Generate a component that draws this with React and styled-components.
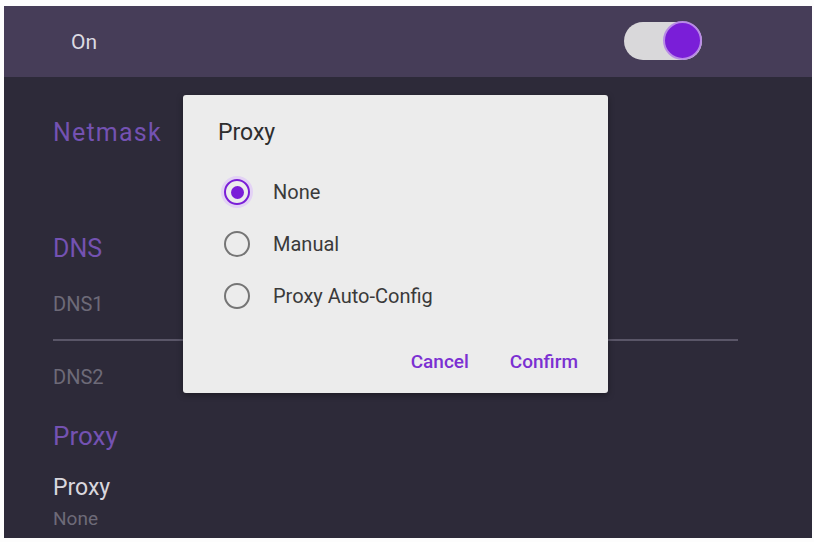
import React from 'react';
import styled, { createGlobalStyle } from 'styled-components';

const GlobalStyle = createGlobalStyle`
  html, body {
    margin: 0;
    padding: 0;
    background: #fdfdfd;
  }
  body {
    font-family: Roboto, "Noto Sans", "Liberation Sans", sans-serif;
  }
`;

const Screen = styled.div`
  position: relative;
  margin: 6px 2px 0 4px;
  width: 808px;
  height: 532px;
  background: #2d2a39;
  overflow: hidden;
`;

const Header = styled.div`
  height: 71px;
  background: #463d58;
  display: flex;
  align-items: center;
  justify-content: space-between;
  padding: 0 110px 0 67px;
  box-sizing: border-box;
`;

const HeaderLabel = styled.span`
  color: #dcdae2;
  font-size: 21px;
  line-height: 28px;
`;

const Switch = styled.div`
  width: 78px;
  height: 38px;
  border-radius: 19px;
  background: #d9d8da;
  display: flex;
  align-items: center;
  justify-content: flex-end;
  margin-top: -2px;
`;

const Thumb = styled.div`
  width: 35px;
  height: 35px;
  border-radius: 50%;
  background: #7a1ed8;
  border: 2px solid #b88ae6;
`;

const Content = styled.div`
  display: flex;
  flex-direction: column;
  padding: 41px 74px 0 49px;
`;

const Heading = styled.div`
  color: ${(p) => p.color || '#7452b2'};
  font-size: ${(p) => p.size || 25}px;
  letter-spacing: ${(p) => p.spacing || 0}px;
  line-height: 30px;
  height: 30px;
  margin-top: ${(p) => p.top || 0}px;
`;

const Label = styled.div`
  color: ${(p) => p.color || '#6d6a78'};
  font-size: ${(p) => p.size || 20}px;
  line-height: ${(p) => p.lh || 24}px;
  height: ${(p) => p.lh || 24}px;
  margin-top: ${(p) => p.top || 0}px;
`;

const Divider = styled.div`
  height: 2px;
  background: #5a5668;
  margin: 23px 0 24px 0;
`;

const Dialog = styled.div`
  position: absolute;
  left: 179px;
  top: 89px;
  width: 425px;
  height: 298px;
  background: #ececec;
  border-radius: 3px;
  box-sizing: border-box;
  padding: 24px 30px 0 35px;
  display: flex;
  flex-direction: column;
  box-shadow: 0 2px 6px rgba(0, 0, 0, 0.35);
`;

const DialogTitle = styled.div`
  color: #2e2e2e;
  font-size: 23px;
  line-height: 28px;
  margin-bottom: 19px;
`;

const Option = styled.div`
  display: flex;
  align-items: center;
  height: 52px;
  padding-left: 6px;
  gap: 23px;
`;

const Radio = styled.div`
  width: 26px;
  height: 26px;
  border-radius: 50%;
  box-sizing: border-box;
  border: 2px solid ${(p) => (p.checked ? '#7a1ed8' : '#757575')};
  display: flex;
  align-items: center;
  justify-content: center;
  box-shadow: ${(p) => (p.checked ? '0 0 0 3px #e3d2f5' : 'none')};
`;

const Dot = styled.div`
  width: 13px;
  height: 13px;
  border-radius: 50%;
  background: #7a1ed8;
`;

const OptionText = styled.span`
  color: #3a3a3a;
  font-size: 20px;
  line-height: 24px;
`;

const Actions = styled.div`
  display: flex;
  justify-content: flex-end;
  gap: 41px;
  margin-top: 28px;
`;

const ActionButton = styled.button`
  background: none;
  border: none;
  padding: 0;
  font-family: inherit;
  font-weight: 500;
  font-size: 19px;
  line-height: 24px;
  color: #7b30d2;
  cursor: pointer;
`;

const options = ['None', 'Manual', 'Proxy Auto-Config'];

export default function App() {
  return (
    <>
      <GlobalStyle />
      <Screen>
        <Header>
          <HeaderLabel>On</HeaderLabel>
          <Switch>
            <Thumb />
          </Switch>
        </Header>
        <Content>
          <Heading spacing={1.2}>Netmask</Heading>
          <Heading top={86}>DNS</Heading>
          <Label top={28}>DNS1</Label>
          <Divider />
          <Label>DNS2</Label>
          <Heading top={32} size={26}>Proxy</Heading>
          <Label top={23} color="#d9d7de" size={23} lh={28}>Proxy</Label>
          <Label top={6} size={19} lh={22}>None</Label>
        </Content>
        <Dialog>
          <DialogTitle>Proxy</DialogTitle>
          {options.map((o, i) => (
            <Option key={o}>
              <Radio checked={i === 0}>{i === 0 && <Dot />}</Radio>
              <OptionText>{o}</OptionText>
            </Option>
          ))}
          <Actions>
            <ActionButton>Cancel</ActionButton>
            <ActionButton>Confirm</ActionButton>
          </Actions>
        </Dialog>
      </Screen>
    </>
  );
}
